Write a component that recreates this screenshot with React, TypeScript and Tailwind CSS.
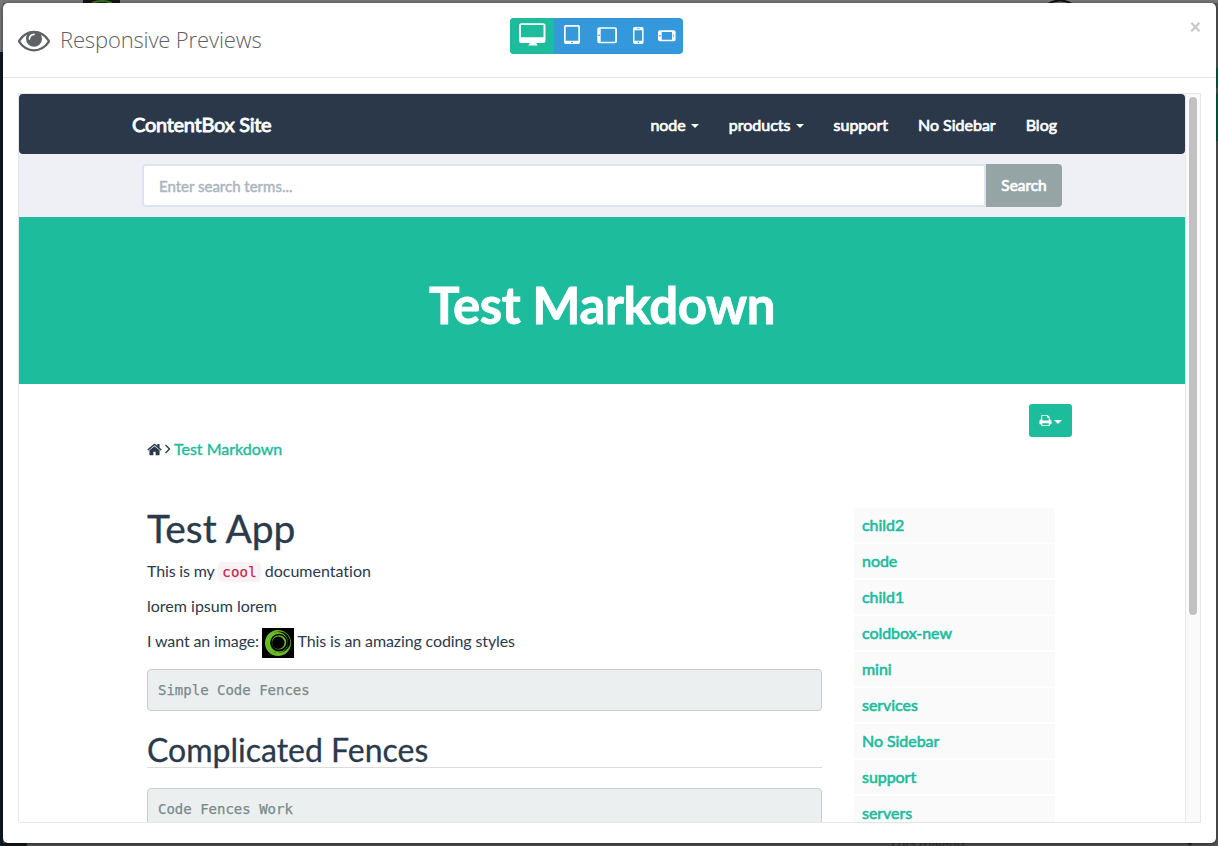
import React from "react";

const EYE =
  "M1664 960q-152-236-381-353 61 104 61 225 0 185-131.5 316.5t-316.5 131.5-316.5-131.5-131.5-316.5q0-121 61-225-229 117-381 353 133 205 333.5 326.5t434.5 121.5 434.5-121.5 333.5-326.5zm-720-384q0-20-14-34t-34-14q-125 0-214.5 89.5t-89.5 214.5q0 20 14 34t34 14 34-14 14-34q0-86 61-147t147-61q20 0 34-14t14-34zm848 384q0 34-20 69-140 230-376.5 368.5t-499.5 138.5-499.5-139-376.5-368q-20-35-20-69t20-69q140-229 376.5-368t499.5-139 499.5 139 376.5 368q20 35 20 69z";
const HOME =
  "M1472 992v480q0 26-19 45t-45 19h-384v-384h-256v384h-384q-26 0-45-19t-19-45v-480q0-1 .5-3t.5-3l575-474 575 474q1 2 1 6zm223-69l-62 74q-8 9-21 11h-3q-13 0-21-7l-692-577-692 577q-12 8-24 7-13-2-21-11l-62-74q-8-10-7-23.5t11-21.5l719-599q32-26 76-26t76 26l244 204v-195q0-14 9-23t23-9h192q14 0 23 9t9 23v408l219 182q10 8 11 21.5t-7 23.5z";
const PRINT =
  "M448 1536h896v-256h-896v256zm0-640h896v-384h-160q-40 0-68-28t-28-68v-160h-640v640zm1152 64q0-26-19-45t-45-19-45 19-19 45 19 45 45 19 45-19 19-45zm128 0v416q0 13-9.5 22.5t-22.5 9.5h-224v160q0 40-28 68t-68 28h-960q-40 0-68-28t-28-68v-160h-224q-13 0-22.5-9.5t-9.5-22.5v-416q0-79 56.5-135.5t135.5-56.5h64v-544q0-40 28-68t68-28h672q40 0 88 20t76 48l152 152q28 28 48 76t20 88v256h64q79 0 135.5 56.5t56.5 135.5z";

function Glyph({ d, className }: { d: string; className: string }) {
  return (
    <svg viewBox="0 0 1792 1792" className={className} fill="currentColor">
      <path d={d} />
    </svg>
  );
}

function Caret() {
  return (
    <svg viewBox="0 0 8 4" className="mt-[2px] h-[4px] w-[8px]" fill="currentColor">
      <path d="M0 0h8L4 4z" />
    </svg>
  );
}

function DeviceSwitch() {
  return (
    <div className="flex h-9 w-[173px] overflow-hidden rounded bg-[#3598db] text-white">
      <button className="w-11 bg-[#1cbc9c]">
        <svg viewBox="0 0 44 36" className="h-9 w-11" fill="currentColor" fillRule="evenodd">
          <path d="M11.500 5.300h21.500a2.500 2.500 0 0 1 2.500 2.500v14.700a2.500 2.500 0 0 1-2.500 2.500h-6.500v1q1 .3 1 1.500h-9q0-1.200 1-1.500v-1h-8a2.500 2.500 0 0 1-2.500-2.500v-14.700a2.500 2.500 0 0 1 2.500-2.500zM11 7v12.200h22.500V7z" />
        </svg>
      </button>
      <svg viewBox="44 0 129 36" className="h-9 w-[129px]" fill="currentColor" fillRule="evenodd">
        <path d="M56 7h12a2 2 0 0 1 2 2v15a2 2 0 0 1-2 2H56a2 2 0 0 1-2-2V9a2 2 0 0 1 2-2zM55.700 8.700v14h12.600v-14zM61.200 23.700v1.300h1.600v-1.300z" />
        <path d="M89.300 9.300h15.700a2 2 0 0 1 2 2v12a2 2 0 0 1-2 2h-15.700a2 2 0 0 1-2-2V11.300a2 2 0 0 1 2-2zM90.700 10.800v13h14.500V10.800zM88.300 16.500v1.600h1.400V16.500z" />
        <path d="M124.800 9h7a1.800 1.800 0 0 1 1.800 1.800v13.400a1.800 1.800 0 0 1-1.800 1.800h-7a1.800 1.800 0 0 1-1.800-1.800V10.800a1.800 1.800 0 0 1 1.800-1.800zM124.500 12.300v10.400h7.600V12.300zM127 10.300v.8h2.600v-.8zM127.600 23.700v1.300h1.500v-1.300z" />
        <path d="M149.800 12.300h14a1.800 1.800 0 0 1 1.800 1.800v7.400a1.800 1.800 0 0 1-1.800 1.800h-14a1.800 1.800 0 0 1-1.800-1.800v-7.400a1.800 1.800 0 0 1 1.800-1.800zM151.700 13.900v7.800h10.400v-7.800zM149.200 17v1.500h1.400V17zM163.300 16.500v2.500h.8v-2.500z" />
      </svg>
    </div>
  );
}

function Logo() {
  return (
    <svg viewBox="0 0 32 30" className="mt-px h-[30px] w-8 shrink-0" fill="#69bd28" fillRule="evenodd">
      <path d="M0 0h32v30H0z" fill="#000" />
      <path d="M16 2a13 13 0 1 0 0 26 13 13 0 1 0 0-26zM17.300 3.600a11 11 0 1 1 0 22 11 11 0 1 1 0-22z" />
      <path d="M15.500 4a10.600 10.600 0 1 0 0 21.200 10.600 10.600 0 1 0 0-21.200zM17 5.800a8.900 8.900 0 1 1 0 17.800 8.900 8.900 0 1 1 0-17.800z" />
      <path d="M17 7.200a7.200 7.200 0 1 0 0 14.400 7.200 7.200 0 1 0 0-14.400zM16.300 8.600a6.200 6.200 0 1 1 0 12.400 6.200 6.200 0 1 1 0-12.400z" />
      <path d="M8 24q8 5 16 0 3-2 4-7-3 7-12 8-4 0-8-1z" />
    </svg>
  );
}

const children = ["child2", "node", "child1", "coldbox-new", "mini", "services", "No Sidebar", "support", "servers"];

function Site() {
  return (
    <div className="h-[728px] w-[1166px] overflow-hidden bg-white text-[16px] text-[#2b3a4b] [font-variant-ligatures:none]">
      <nav className="flex h-[60px] items-center rounded bg-[#2a3849] pr-[128px] pl-[113px] text-white">
        <span className="w-[140px] text-[20px] tracking-[-0.27px] whitespace-nowrap [-webkit-text-stroke:0.9px_white]">ContentBox Site</span>
        <div className="ml-auto flex items-center gap-[30px] pt-px whitespace-nowrap [-webkit-text-stroke:0.7px_white]">
          <span className="flex items-center gap-[5px]">node <Caret /></span>
          <span className="flex items-center gap-[5px]">products <Caret /></span>
          <span>support</span>
          <span>No Sidebar</span>
          <span>Blog</span>
        </div>
      </nav>
      <div className="flex h-[63px] bg-[#eff0f6] pt-[10px] pl-[123px]">
        <div className="flex h-[43px] w-[844px] items-center rounded-l border-2 border-[#dce4ec] bg-white pt-[2px] pl-[15px] text-[15px] text-[#acb6c0]">
          <span className="[-webkit-text-stroke:0.5px_#acb6c0]">Enter search terms...</span>
        </div>
        <button className="h-[43px] w-[76px] rounded-r bg-[#95a5a5] text-[15.4px] text-white [-webkit-text-stroke:0.7px_white]">Search</button>
      </div>
      <header className="flex h-[167px] items-center justify-center bg-[#1cbc9c] pt-[10px]">
        <h1 className="text-[51px] font-bold tracking-[-0.42px] text-white [-webkit-text-stroke:0.8px_white]">Test Markdown</h1>
      </header>
      <div className="flex h-[53px] justify-end pt-5 pr-[113px]">
        <button className="flex h-[33px] w-[43px] items-center justify-center gap-[2px] rounded-[3px] bg-[#1cbc9c] text-white">
          <Glyph d={PRINT} className="h-[13px] w-[13px]" />
          <Caret />
        </button>
      </div>
      <div className="flex h-[24px] items-center pl-[128px]">
        <Glyph d={HOME} className="h-[17px] w-[15px] scale-105" />
        <svg viewBox="0 0 12 12" className="h-3 w-3 fill-none stroke-current stroke-[1.4]">
          <path d="M3.500 2l4 4-4 4" />
        </svg>
        <span className="whitespace-nowrap text-[#1cbc9c] [-webkit-text-stroke:0.4px_#1cbc9c]">Test Markdown</span>
      </div>
      <div className="flex pl-[128px]">
        <main className="w-[675px] pt-[45px]">
          <h1 className="h-[44px] text-[39px] leading-[44px] [-webkit-text-stroke:0.3px_#2b3a4b]">Test App</h1>
          <p className="mt-[10px] h-[22px] leading-[22px] tracking-[-0.15px]">
            This is my{" "}
            <code className="rounded bg-[#f9f2f4] px-1 py-[2px] font-['DejaVu_Sans_Mono',monospace] text-[14px] tracking-[0.2px] text-[#c7254e] [-webkit-text-stroke:0.25px_#c7254e]">cool</code>{" "}
            <span className="tracking-normal">documentation</span>
          </p>
          <p className="mt-[13px] h-[22px] leading-[22px]">lorem ipsum lorem</p>
          <p className="mt-[10px] flex h-[30px] items-center tracking-[-0.12px]">
            <span className="mr-[3px] -mt-[3px] whitespace-nowrap">I want an image:</span>
            <Logo />
            <span className="-mt-[3px] ml-[3.5px]">This is an amazing coding styles</span>
          </p>
          <pre className="mt-[12px] h-[42px] rounded border border-[#cbcdcd] bg-[#ebefef] pl-[10px] font-['DejaVu_Sans_Mono',monospace] text-[14px] leading-[40px] text-[#7b8a8a] [-webkit-text-stroke:0.25px_#7b8a8a]">Simple Code Fences</pre>
          <h2 className="mt-[19px] h-[38px] border-b border-[#dcdcdc] text-[32px] leading-[40px] [-webkit-text-stroke:0.3px_#2b3a4b]">Complicated Fences</h2>
          <pre className="mt-5 h-[42px] rounded border border-[#cbcdcd] bg-[#ebefef] pl-[10px] font-['DejaVu_Sans_Mono',monospace] text-[14px] leading-[40px] text-[#7b8a8a] [-webkit-text-stroke:0.25px_#7b8a8a]">Code Fences Work</pre>
        </main>
        <aside className="mt-[47px] ml-8 flex w-[201px] flex-col gap-[2px] text-[#1cbc9c]">
          {children.map((name) => (
            <a key={name} className="h-[34px] bg-[#fafafa] pl-2 leading-[33px] tracking-[-0.05px] [-webkit-text-stroke:0.6px_#1cbc9c]">{name}</a>
          ))}
        </aside>
      </div>
    </div>
  );
}

function Backdrop() {
  return (
    <svg viewBox="0 0 1218 846" className="absolute inset-0 h-[846px] w-[1218px]">
      <path d="M0 0h1218v846H0z" fill="#58585a" />
      <path d="M0 0h1218v3H0zM0 0h3v52H0z" fill="#777" />
      <path d="M0 52h3v794H0zM0 843h27v3H0z" fill="#101820" />
      <path d="M83 0h37v3H83z" fill="#151515" />
      <path d="M92 3q10-4 20 0" fill="none" stroke="#39731f" strokeWidth="2" />
      <path d="M1048 4q12-7 24 0" fill="none" stroke="#111" strokeWidth="2" />
      <path d="M1216 68h2v20h-2zM1216 93h2v48h-2z" fill="#07614c" />
      <text x="891" y="847" fontSize="14" fill="#303032">Luis Majano</text>
      <path d="M1187 843h5l-2 3z" fill="#222" />
    </svg>
  );
}

export default function App() {
  return (
    <div className="relative h-[846px] w-[1218px] overflow-hidden p-[3px] pr-[2px] font-[Lato,sans-serif]">
      <Backdrop />
      <section className="relative h-[840px] w-[1213px] rounded-[5px] bg-white shadow-[0_1px_4px_rgba(0,0,0,0.6)]">
        <header className="flex h-[75px] items-start border-b border-[#e5e5e5] pt-[15px] pl-[15px]">
          <div className="flex w-[492px] items-center pt-[6px] text-[#5f6165]">
            <Glyph d={EYE} className="h-8 w-8" />
            <h3 className="-mt-[2px] ml-[10px] font-['Open_Sans',sans-serif] text-[22px] leading-8 font-light tracking-[-0.15px] whitespace-nowrap">Responsive Previews</h3>
          </div>
          <DeviceSwitch />
          <button className="mt-[-2px] mr-[15px] ml-auto text-[20px] leading-5 font-black text-[#c8c8c8]">×</button>
        </header>
        <div className="mt-[15px] ml-[15px] flex h-[730px] w-[1183px] border border-[#e7e7e7]">
          <Site />
          <div className="flex w-[15px] justify-center border-l border-[#e7e7e7] bg-[#fafafa] pt-[3px]">
            <div className="h-[518px] w-2 rounded-full bg-[#c1c1c1]" />
          </div>
        </div>
      </section>
    </div>
  );
}
